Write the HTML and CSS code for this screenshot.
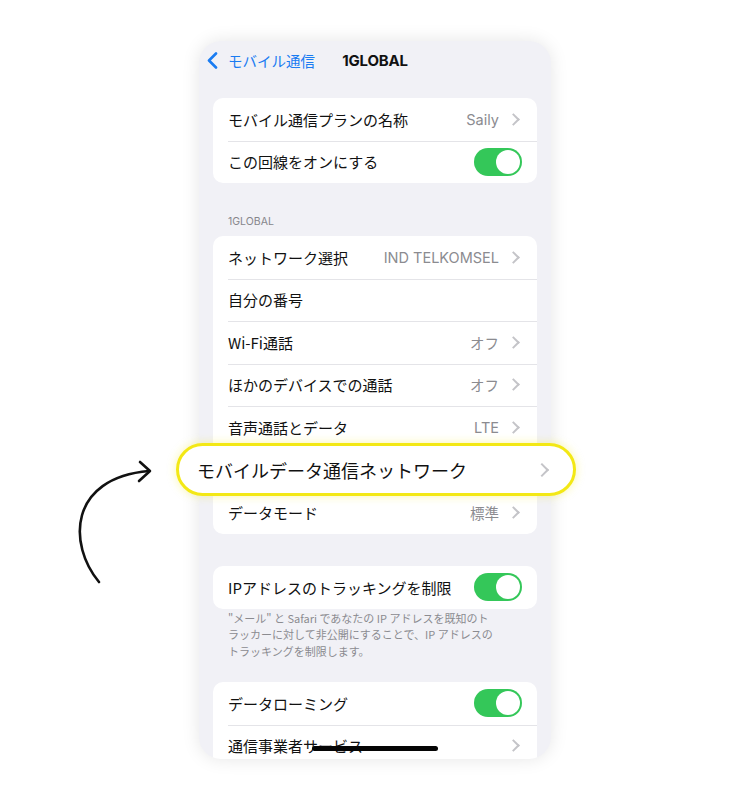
FILE: index.html
```html
<!DOCTYPE html>
<html lang="ja">
<head>
  <meta charset="UTF-8" />
  <meta name="viewport" content="width=device-width, initial-scale=1.0"/>
  <title>1GLOBAL</title>
  <link rel="stylesheet" href="styles.css">
</head>
<body>
  <div class="stage">
    <div class="phone">
      <div class="nav">
        <a class="back">
          <svg width="11" height="17" viewBox="0 0 11 17"><path d="M9 1.5 L2 8.5 L9 15.5" fill="none" stroke="#1a7cf2" stroke-width="2.6" stroke-linecap="round" stroke-linejoin="round"/></svg>
          <span>モバイル通信</span>
        </a>
        <div class="nav-title">1GLOBAL</div>
      </div>

      <div class="card first">
        <div class="row"><span class="label">モバイル通信プランの名称</span><span class="value">Saily</span><i class="chev"></i></div>
        <div class="row"><span class="label">この回線をオンにする</span><span class="toggle"></span></div>
      </div>

      <div class="section-head">1GLOBAL</div>
      <div class="card">
        <div class="row"><span class="label">ネットワーク選択</span><span class="value">IND TELKOMSEL</span><i class="chev"></i></div>
        <div class="row"><span class="label">自分の番号</span></div>
        <div class="row"><span class="label">Wi-Fi通話</span><span class="value">オフ</span><i class="chev"></i></div>
        <div class="row"><span class="label">ほかのデバイスでの通話</span><span class="value">オフ</span><i class="chev"></i></div>
        <div class="row"><span class="label">音声通話とデータ</span><span class="value">LTE</span><i class="chev"></i></div>
        <div class="row"><span class="label">モバイルデータ通信ネットワーク</span><i class="chev"></i></div>
        <div class="row"><span class="label">データモード</span><span class="value">標準</span><i class="chev"></i></div>
      </div>

      <div class="card spaced">
        <div class="row"><span class="label">IPアドレスのトラッキングを制限</span><span class="toggle"></span></div>
      </div>
      <p class="footnote">"メール" と Safari であなたの IP アドレスを既知のト<br>ラッカーに対して非公開にすることで、IP アドレスの<br>トラッキングを制限します。</p>

      <div class="card">
        <div class="row"><span class="label">データローミング</span><span class="toggle"></span></div>
        <div class="row"><span class="label">通信事業者サービス</span><i class="chev"></i></div>
      </div>

      <div class="home-bar"></div>
    </div>

    <!-- callout over the mobile data row -->
    <div class="highlight">
      <span>モバイルデータ通信ネットワーク</span>
      <i class="chev"></i>
    </div>

    <svg class="arrow" width="120" height="150" viewBox="60 450 120 150">
      <path d="M99 582 C 68 545, 68 478, 149 471" fill="none" stroke="#111" stroke-width="2.6" stroke-linecap="round"/>
      <path d="M140 462 L150 471 L139 481" fill="none" stroke="#111" stroke-width="2.6" stroke-linecap="round" stroke-linejoin="round"/>
    </svg>
  </div>
</body>
</html>
```

FILE: styles.css
```css
body {
  margin: 0;
  background: #ffffff;
  font-family: "Noto Sans CJK JP", "Noto Sans", sans-serif;
  color: #111;
}
.stage {
  position: relative;
  width: 751px;
  height: 800px;
  overflow: hidden;
}
.phone {
  position: relative;
  margin: 41px 0 0 199px;
  width: 352px;
  height: 718px;
  box-sizing: border-box;
  padding: 0 14px;
  background: #f1f1f6;
  border-radius: 22px;
  box-shadow: 0 0 18px rgba(0,0,0,0.10);
  overflow: hidden;
}
.nav {
  position: relative;
  height: 38px;
  display: flex;
  align-items: center;
  justify-content: center;
}
.back {
  position: absolute;
  left: -6px;
  top: 0;
  height: 38px;
  display: flex;
  align-items: center;
  gap: 10px;
  color: #1a7cf2;
  font-size: 14.5px;
}
.nav-title {
  font-family: "Inter", "Liberation Sans", sans-serif;
  font-weight: 700;
  font-size: 15px;
  letter-spacing: -0.2px;
}
.card {
  background: #ffffff;
  border-radius: 10px;
  overflow: hidden;
}
.card.first {
  margin-top: 19px;
}
.card.spaced {
  margin-top: 32.5px;
}
.row {
  position: relative;
  height: 42.5px;
  box-sizing: border-box;
  display: flex;
  align-items: center;
  padding: 0 15px;
  font-size: 15px;
}
.row + .row::before {
  content: "";
  position: absolute;
  top: 0;
  left: 15px;
  right: 0;
  height: 1px;
  background: #e4e4e8;
}
.label {
  flex: 1;
  white-space: nowrap;
}
.value {
  color: #8b8b90;
  font-family: "Inter", "Noto Sans CJK JP", sans-serif;
  font-size: 14.5px;
  margin-right: 10px;
}
.chev {
  width: 7px;
  height: 7px;
  border-right: 2px solid #c4c4c8;
  border-top: 2px solid #c4c4c8;
  transform: rotate(45deg);
  margin-right: 4px;
}
.toggle {
  position: relative;
  width: 48px;
  height: 28px;
  border-radius: 14px;
  background: #34c759;
}
.toggle::after {
  content: "";
  position: absolute;
  right: 2px;
  top: 2px;
  width: 24px;
  height: 24px;
  border-radius: 50%;
  background: #ffffff;
}
.section-head {
  margin: 32px 0 0;
  padding: 0 15px;
  height: 21px;
  font-family: "Inter", "Liberation Sans", sans-serif;
  font-size: 10.5px;
  color: #86868b;
}
.footnote {
  margin: 1px 0 23px;
  padding: 0 15px;
  font-size: 11px;
  line-height: 16.5px;
  color: #8b8b90;
}
.home-bar {
  position: absolute;
  left: 113px;
  bottom: 8px;
  width: 126px;
  height: 5px;
  border-radius: 3px;
  background: #050505;
}
.highlight {
  position: absolute;
  left: 176px;
  top: 443px;
  width: 400px;
  height: 53px;
  box-sizing: border-box;
  border: 3px solid #f3e815;
  border-radius: 27px;
  background: #ffffff;
  box-shadow: 0 0 10px rgba(243,232,21,0.35);
  display: flex;
  align-items: center;
  padding: 0 22px 0 18px;
  font-size: 18px;
}
.highlight span {
  flex: 1;
}
.highlight .chev {
  width: 8px;
  height: 8px;
}
.arrow {
  position: absolute;
  left: 60px;
  top: 450px;
}
```
